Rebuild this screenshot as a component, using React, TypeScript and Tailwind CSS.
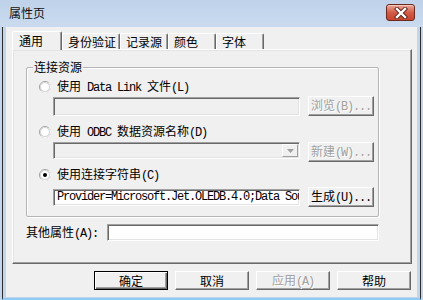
import React from "react";

// ASCII parts of the labels are drawn in a fixed-width serif face, like SimSun
function M({ children }: { children: React.ReactNode }) {
  return (
    <span className="font-['Liberation_Mono',monospace] text-[12px] tracking-[-1.2px] whitespace-pre">
      {children}
    </span>
  );
}

function Radio({ checked }: { checked?: boolean }) {
  return (
    <svg width="12" height="12" viewBox="0 0 12 12" className="shrink-0">
      <circle cx="6" cy="6" r="5.5" fill="#ffffff" stroke="#a0a0a0" />
      <path d="M 2.1 9.9 A 5.5 5.5 0 0 0 9.9 2.1" fill="none" stroke="#ffffff" />
      <circle cx="6" cy="6" r="4.5" fill="#ffffff" stroke="#d4d4d4" />
      {checked && <circle cx="6" cy="6" r="2" fill="#000000" />}
    </svg>
  );
}

function Btn({
  children,
  disabled,
  isDefault,
  className,
}: {
  children: React.ReactNode;
  disabled?: boolean;
  isDefault?: boolean;
  className?: string;
}) {
  const edge = isDefault
    ? "border border-[#000000] shadow-[inset_1px_1px_0_#ffffff,inset_-1px_-1px_0_#696969,inset_-2px_-2px_0_#a0a0a0]"
    : "border border-t-[#ffffff] border-l-[#ffffff] border-r-[#696969] border-b-[#696969] shadow-[inset_-1px_-1px_0_#a0a0a0]";
  const tone = disabled ? "text-[#a0a0a0] [text-shadow:1px_1px_0_#ffffff]" : "text-black";
  return (
    <div className={`flex items-center justify-center bg-[#f0f0f0] ${edge} ${tone} ${className ?? ""}`}>
      <span>{children}</span>
    </div>
  );
}

function Field({
  children,
  disabled,
  className,
}: {
  children?: React.ReactNode;
  disabled?: boolean;
  className?: string;
}) {
  return (
    <div
      className={`flex items-center overflow-hidden border border-t-[#a0a0a0] border-l-[#a0a0a0] border-r-[#ffffff] border-b-[#ffffff] shadow-[inset_1px_1px_0_#696969,inset_-1px_-1px_0_#e3e3e3] ${
        disabled ? "bg-[#f0f0f0]" : "bg-white"
      } ${className ?? ""}`}
    >
      {children}
    </div>
  );
}

const tabs = [
  { label: "身份验证", w: "w-[58px]" },
  { label: "记录源", w: "w-[48px]" },
  { label: "颜色", w: "w-[48px]" },
  { label: "字体", w: "w-[48px]" },
];

export default function App() {
  return (
    <div className="w-[423px] h-[300px] overflow-hidden flex flex-col bg-[#c3d5ec] font-['Noto_Sans_CJK_SC',sans-serif] text-[12px] leading-[16px] text-black">
      {/* title bar */}
      <div className="h-[27px] shrink-0 flex items-start bg-gradient-to-b from-[#bfd2ea] to-[#cadbef]">
        <span className="ml-[9px] mt-[5px] text-[#111111]">属性页</span>
        <div className="ml-auto mr-[8px] mt-[4px] w-[29px] h-[17px] rounded-[3px] border border-[#6b2a1f] bg-gradient-to-b from-[#e9a898] via-[#d25c48] to-[#c8432d] shadow-[inset_0_1px_0_#f4c7bc] flex items-center justify-center">
          <svg width="14" height="12" viewBox="0 0 14 12">
            <path d="M3 2 L11 10 M11 2 L3 10" stroke="#5a2018" strokeWidth="4.2" strokeLinecap="square" />
            <path d="M3 2 L11 10 M11 2 L3 10" stroke="#ffffff" strokeWidth="2.4" strokeLinecap="square" />
          </svg>
        </div>
      </div>

      {/* frame */}
      <div className="flex-1 mx-[2px] px-[3px] pb-[1px] border-x border-x-[#2c2c2c] border-b-2 border-b-[#8fcbf2]">
        <div className="h-full bg-[#f0f0f0] flex flex-col">
          {/* tab strip */}
          <div className="mt-[4px] ml-[6px] h-[18px] flex items-end">
            <div className="relative z-10 -mb-[1px] w-[50px] h-[19px] pl-[6px] pt-[1px] bg-[#f0f0f0] border-t border-l border-t-white border-l-white border-r border-r-[#696969] shadow-[inset_-1px_0_0_#a0a0a0] rounded-t-[2px]">
              通用
            </div>
            {tabs.map((t) => (
              <div
                key={t.label}
                className={`${t.w} h-[16px] pl-[5px] bg-[#f0f0f0] border-t border-t-white border-l border-l-white border-r border-r-[#696969] shadow-[inset_-1px_0_0_#a0a0a0] rounded-t-[2px] flex items-center`}
              >
                {t.label}
              </div>
            ))}
          </div>

          {/* tab panel */}
          <div className="ml-[6px] w-[400px] h-[215px] border border-t-white border-l-white border-r-[#696969] border-b-[#696969] shadow-[inset_-1px_-1px_0_#a0a0a0,inset_1px_1px_0_#e3e3e3] flex flex-col">
            {/* group box */}
            <div className="relative ml-[13px] mt-[17px] w-[353px] h-[150px] rounded-[2px] border border-[#b5b5b5] shadow-[inset_1px_1px_0_#ffffff,1px_1px_0_#ffffff] flex flex-col pt-[11px]">
              <span className="absolute left-[6px] -top-[9px] px-[1px] bg-[#f0f0f0]">连接资源</span>

              <div className="h-[16px] pl-[12px] flex items-center gap-[6px]">
                <Radio />
                <span>
                  使用<M> Data Link </M>文件<M>(L)</M>
                </span>
              </div>
              <div className="mt-[1px] pl-[26px] flex items-start gap-[8px]">
                <Field disabled className="mt-[1px] w-[247px] h-[19px]" />
                <Btn disabled className="w-[66px] h-[20px]">
                  浏览<M>(B)...</M>
                </Btn>
              </div>

              <div className="mt-[8px] h-[16px] pl-[12px] flex items-center gap-[6px]">
                <Radio />
                <span>
                  使用<M> ODBC </M>数据资源名称<M>(D)</M>
                </span>
              </div>
              <div className="mt-[2px] pl-[26px] flex items-start gap-[8px]">
                <Field disabled className="w-[247px] h-[17px] justify-end pr-[1px]">
                  <div className="w-[16px] h-[13px] bg-[#f0f0f0] border border-t-white border-l-white border-r-[#a0a0a0] border-b-[#a0a0a0] flex items-center justify-center">
                    <svg width="7" height="4" viewBox="0 0 7 4">
                      <path d="M0 0 L7 0 L3.5 4 Z" fill="#a0a0a0" />
                    </svg>
                  </div>
                </Field>
                <Btn disabled className="w-[66px] h-[20px]">
                  新建<M>(W)...</M>
                </Btn>
              </div>

              <div className="mt-[5px] h-[16px] pl-[12px] flex items-center gap-[6px]">
                <Radio checked />
                <span>
                  使用连接字符串<M>(C)</M>
                </span>
              </div>
              <div className="mt-[4px] pl-[26px] flex items-center gap-[8px]">
                <Field className="w-[247px] h-[17px] pl-[3px]">
                  <M>Provider=Microsoft.Jet.OLEDB.4.0;Data Sou</M>
                </Field>
                <Btn className="w-[66px] h-[20px]">
                  生成<M>(U)...</M>
                </Btn>
              </div>
            </div>

            {/* other properties */}
            <div className="mt-[7px] ml-[13px] h-[17px] flex items-center">
              <span className="w-[81px]">
                其他属性<M>(A):</M>
              </span>
              <Field className="w-[272px] h-[17px]" />
            </div>
          </div>

          {/* dialog buttons */}
          <div className="mt-[7px] pr-[6px] flex justify-end gap-[7px]">
            <Btn isDefault className="w-[74px] h-[19px]">
              确定
            </Btn>
            <Btn className="w-[74px] h-[19px]">取消</Btn>
            <Btn disabled className="w-[74px] h-[19px]">
              应用<M>(A)</M>
            </Btn>
            <Btn className="w-[74px] h-[19px]">帮助</Btn>
          </div>
        </div>
      </div>
    </div>
  );
}
